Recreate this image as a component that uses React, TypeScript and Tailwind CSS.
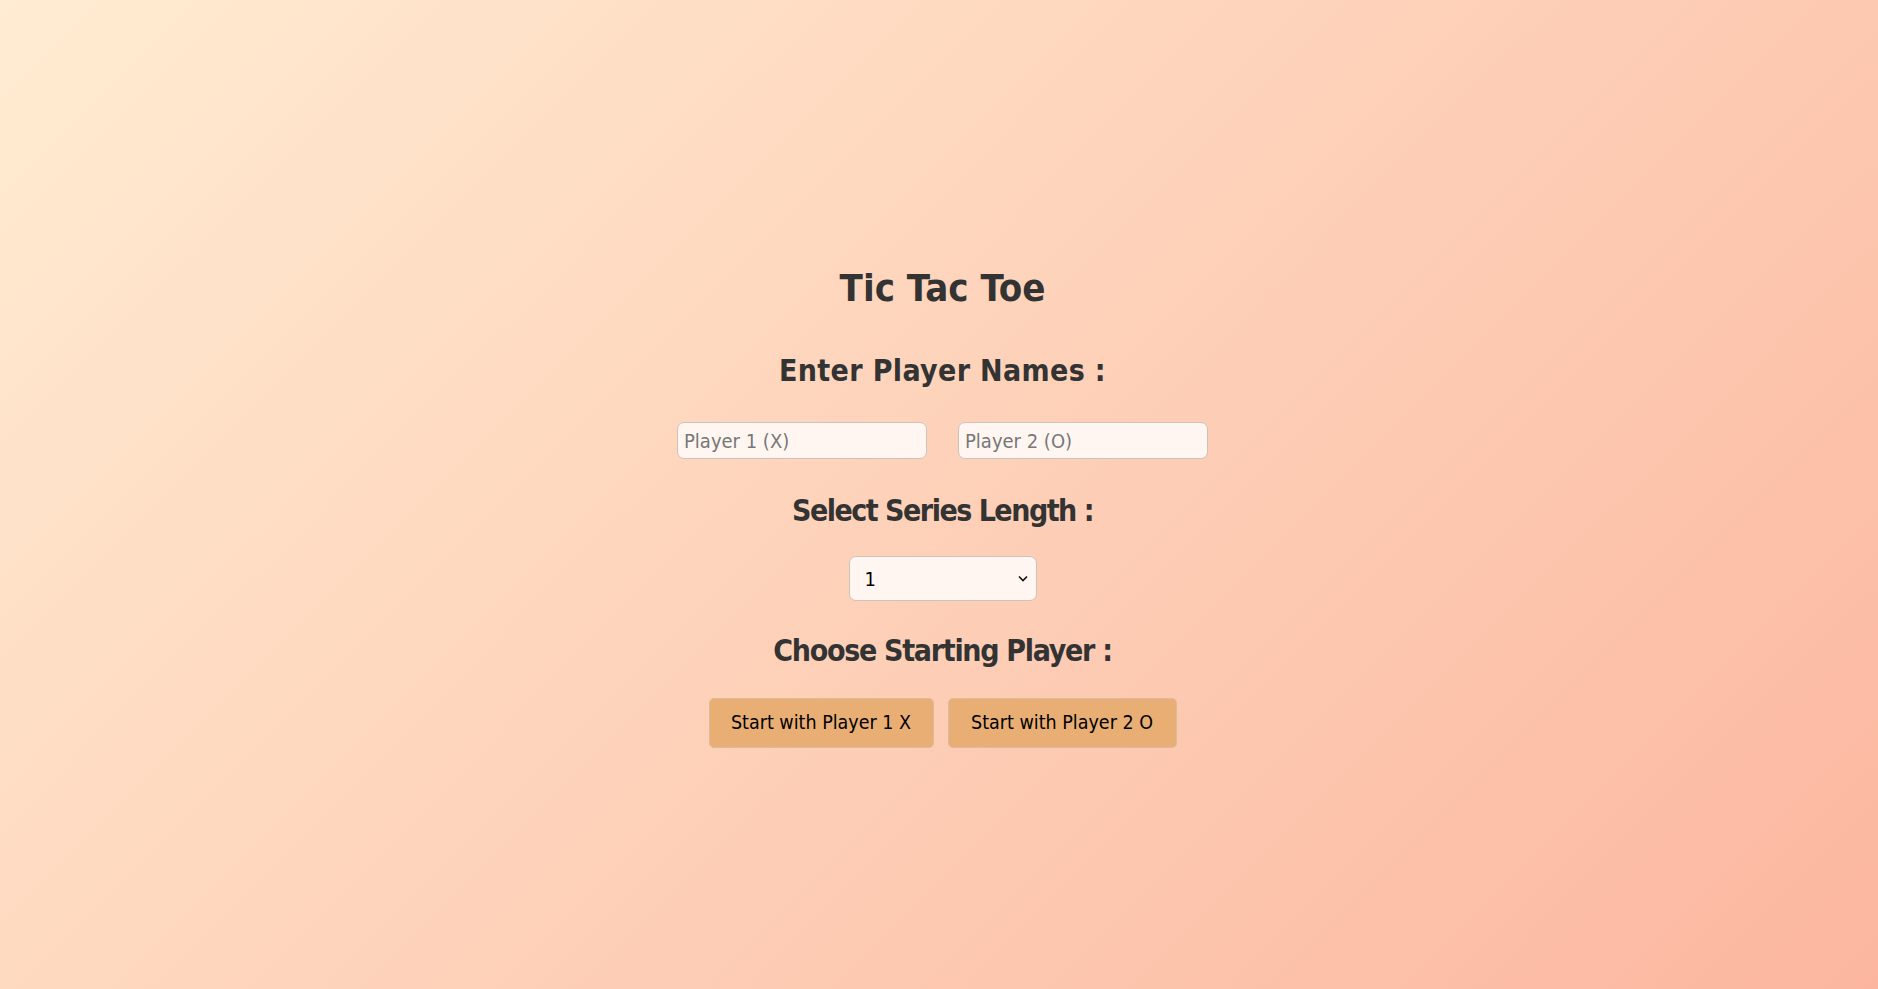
import React from "react";

export default function App() {
  const font = { fontFamily: '"DejaVu Sans Condensed", "DejaVu Sans", sans-serif', fontStretch: "semi-condensed" as const };
  return (
    <div
      className="w-full h-[989px] bg-[linear-gradient(135deg,#ffecd2_0%,#fcb69f_100%)] flex flex-col items-center pl-[7px] text-[#333]"
      style={font}
    >
      <h1 className="mt-[266px] text-[38px] leading-[44px] font-bold">Tic Tac Toe</h1>
      <h2 className="mt-[43px] text-[30px] leading-[36px] font-bold tracking-[0.35px]">Enter Player Names :</h2>
      <div className="mt-[33px] flex gap-[31px]">
        <input
          className="w-[250px] h-[37px] px-[6px] text-[20px] bg-[#fff6f2] border border-[#cbc3be] rounded-[7px] placeholder:text-[#777] outline-none"
          placeholder="Player 1 (X)"
        />
        <input
          className="w-[250px] h-[37px] px-[6px] text-[20px] bg-[#fff6f2] border border-[#cbc3be] rounded-[7px] placeholder:text-[#777] outline-none"
          placeholder="Player 2 (O)"
        />
      </div>
      <h2 className="mt-[34px] text-[30px] leading-[36px] font-bold tracking-[-1.5px]">Select Series Length :</h2>
      <div className="mt-[27px] relative w-[188px] h-[45px] bg-[#fff6f2] border border-[#cbc3be] rounded-[7px] flex items-center px-[15px] text-[20px] text-black">
        <span>1</span>
        <svg className="absolute right-[8px] top-[18px]" width="10" height="7" viewBox="0 0 10 7">
          <path d="M1 1.5 L5 5.5 L9 1.5" fill="none" stroke="#111" strokeWidth="1.6" />
        </svg>
      </div>
      <h2 className="mt-[32px] text-[30px] leading-[36px] font-bold tracking-[-1.3px]">Choose Starting Player :</h2>
      <div className="mt-[29px] flex gap-[14px]">
        <button className="w-[225px] h-[50px] bg-[#e9ae74] border border-[#d9bc9f] rounded-[5px] text-[19.5px] text-black">
          Start with Player 1 X
        </button>
        <button className="w-[229px] h-[50px] bg-[#e9ae74] border border-[#d9bc9f] rounded-[5px] text-[19.5px] text-black">
          Start with Player 2 O
        </button>
      </div>
    </div>
  );
}
